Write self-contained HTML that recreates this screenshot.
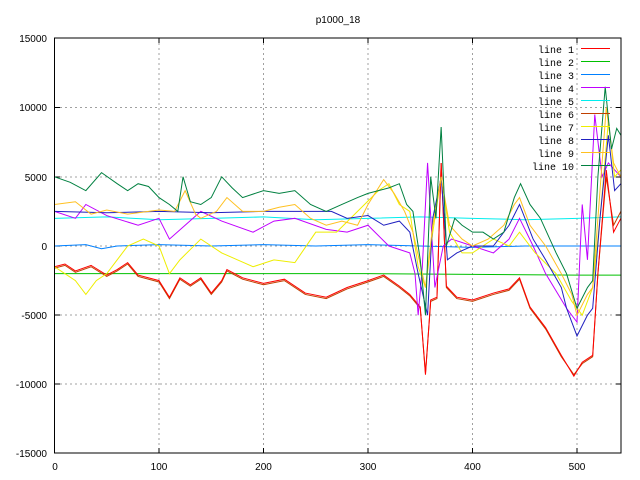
<!DOCTYPE html>
<html><head><meta charset="utf-8"><style>
html,body{margin:0;padding:0;background:#fff;}
svg{display:block;font-family:"Liberation Sans",sans-serif;font-size:10px;}
</style></head><body>
<svg width="640" height="480" viewBox="0 0 640 480">
<rect width="640" height="480" fill="#fff"/>
<text x="338" y="23" text-anchor="middle">p1000_18</text>
<g stroke="#a0a0a0" stroke-width="1" stroke-dasharray="2,3" fill="none">
<path d="M55 107.5H621M55 177H621M55 246H621M55 315H621M55 384H621"/>
<path d="M159 38V453M263.5 38V453M368 38V453M472.5 38V453M577 38V453"/>
</g>
<g text-anchor="end">
<text x="47" y="42">15000</text><text x="47" y="111">10000</text><text x="47" y="181">5000</text>
<text x="47" y="250">0</text><text x="47" y="319">-5000</text><text x="47" y="388">-10000</text><text x="47" y="457">-15000</text>
</g>
<g text-anchor="middle">
<text x="55" y="470">0</text><text x="159" y="470">100</text><text x="263.5" y="470">200</text>
<text x="368" y="470">300</text><text x="472.5" y="470">400</text><text x="577" y="470">500</text>
</g>
<g stroke="#000" stroke-width="1">
<path d="M55 107.5h5M55 177h5M55 246h5M55 315h5M55 384h5M621 107.5h-5M621 177h-5M621 246h-5M621 315h-5M621 384h-5"/>
<path d="M159 453v-5M263.5 453v-5M368 453v-5M472.5 453v-5M577 453v-5M159 38v5M263.5 38v5M368 38v5M472.5 38v5M577 38v5"/>
</g>
<g transform="translate(54.5,246) scale(1.045,-0.01384)" fill="none" stroke-width="1">
<polyline vector-effect="non-scaling-stroke" stroke="#00c000" points="0,-2000 100,-2000 200,-2000 300,-2000 400,-2050 500,-2100 542,-2100"/>
<polyline vector-effect="non-scaling-stroke" stroke="#00eeee" points="0,2000 50,2100 100,1900 150,2000 200,2100 250,1900 300,2000 350,2100 400,2000 450,1900 500,2000 542,2100"/>
<polyline vector-effect="non-scaling-stroke" stroke="#0080ff" points="0,0 30,100 45,-200 60,0 100,100 150,0 200,100 250,0 300,100 350,0 400,-100 450,0 500,0 542,0"/>
<polyline vector-effect="non-scaling-stroke" stroke="#c04000" points="0,-1600 10,-1400 20,-1900 35,-1500 50,-2200 60,-1800 70,-1300 80,-2200 100,-2600 110,-3800 120,-2400 130,-2900 140,-2400 150,-3500 160,-2600 165,-1800 180,-2400 200,-2800 220,-2500 240,-3500 260,-3800 280,-3100 300,-2600 315,-2200 330,-3000 340,-3600 350,-4500 355,-9200 360,-4000 366,-3800 370,6000 375,-3000 385,-3800 400,-4000 420,-3500 435,-3200 445,-2400 455,-4500 470,-6000 485,-8000 497,-9300 505,-8500 515,-8000 520,-2000 528,5000 535,1500 542,2500"/>
<polyline vector-effect="non-scaling-stroke" stroke="#ff0000" points="0,-1500 10,-1300 20,-1800 35,-1400 50,-2100 60,-1700 70,-1200 80,-2100 100,-2500 110,-3700 120,-2300 130,-2800 140,-2300 150,-3400 160,-2500 165,-1700 180,-2300 200,-2700 220,-2400 240,-3400 260,-3700 280,-3000 300,-2500 315,-2100 330,-2900 340,-3500 350,-4400 355,-9300 360,-3900 366,-3700 370,6000 375,-2900 385,-3700 400,-3900 420,-3400 435,-3100 445,-2300 455,-4400 470,-5900 485,-7900 497,-9400 505,-8400 515,-7900 520,-2000 528,5500 535,1000 542,2000"/>
<polyline vector-effect="non-scaling-stroke" stroke="#c000ff" points="0,2500 20,2000 30,3000 50,2200 80,1500 100,2000 110,500 125,1500 140,2500 160,1800 190,1000 210,1800 230,2000 260,1200 280,1000 300,1500 320,0 340,-500 345,-2000 348,-5000 352,-1500 357,6000 364,-3000 372,0 380,500 400,0 420,-500 435,500 445,2000 458,0 470,-2000 490,-4500 500,-5500 505,3000 510,-1000 517,9500 524,5000 530,6000 542,5000"/>
<polyline vector-effect="non-scaling-stroke" stroke="#eeee00" points="0,-1500 10,-2000 20,-2500 30,-3500 40,-2500 50,-2000 60,-1000 70,0 85,500 100,0 110,-2000 120,-1000 140,500 160,-500 175,-1000 190,-1500 210,-1000 230,-1200 250,1000 270,1000 290,2500 310,4000 320,4500 330,3000 340,2500 348,-1500 355,-3000 362,1000 370,5000 378,1000 390,-500 400,-500 420,500 435,0 445,1000 460,-500 480,-2000 495,-4000 505,-5000 515,-3000 522,2000 530,9000 536,5000 542,5500"/>
<polyline vector-effect="non-scaling-stroke" stroke="#2020c0" points="0,2500 50,2400 100,2500 150,2400 200,2500 265,2500 280,2000 300,2200 315,1500 330,1800 340,1000 348,-2000 357,-5000 362,2000 370,5000 376,-1000 385,-500 400,0 420,0 435,1500 445,3000 458,500 470,-1000 485,-3000 490,-4500 500,-6500 510,-5000 515,-4500 522,2000 530,8000 536,4000 542,4500"/>
<polyline vector-effect="non-scaling-stroke" stroke="#ffc020" points="0,3000 20,3200 35,2300 50,2600 70,2300 100,2600 115,2500 125,4000 135,2300 140,2000 155,2500 165,3500 180,2500 200,2500 215,2800 230,3000 245,2000 260,1500 275,1800 290,1500 300,3000 315,4800 325,3800 335,2500 343,1000 355,-3000 362,1500 370,5000 378,1500 390,500 400,0 415,500 430,1500 440,3000 445,3500 455,1500 470,0 485,-2000 495,-3500 500,-5000 510,-3500 515,-3000 522,4000 528,10000 535,6000 542,5000"/>
<polyline vector-effect="non-scaling-stroke" stroke="#008040" points="0,5000 15,4600 30,4000 45,5300 60,4500 70,4000 80,4500 90,4300 100,3500 110,3000 118,2500 123,5000 130,3200 140,3000 150,3500 160,5000 170,4200 180,3500 200,4000 215,3800 230,4000 245,3000 260,2500 275,3000 290,3500 300,3800 310,4000 320,4200 330,4500 337,3000 343,2500 350,-1000 355,-5000 360,5000 365,2000 370,8600 375,0 383,2000 390,1500 400,1000 410,1000 420,500 430,1000 440,3500 446,4500 455,3000 465,2000 480,-500 490,-2000 500,-4500 510,-3000 515,-2500 520,5000 527,11500 533,7000 538,8500 542,8000"/>
</g>
<rect x="54.5" y="38" width="566.5" height="415" fill="none" stroke="#000" stroke-width="1"/>
<g text-anchor="end" font-family="Liberation Mono,monospace">
<text x="574" y="53">line 1</text><text x="574" y="66">line 2</text><text x="574" y="79">line 3</text>
<text x="574" y="92">line 4</text><text x="574" y="105">line 5</text><text x="574" y="118">line 6</text>
<text x="574" y="131">line 7</text><text x="574" y="144">line 8</text><text x="574" y="157">line 9</text><text x="574" y="170">line 10</text>
</g>
<g stroke-width="1">
<path d="M581 48.5h29" stroke="#ff0000"/><path d="M581 61.5h29" stroke="#00c000"/><path d="M581 74.5h29" stroke="#0080ff"/>
<path d="M581 87.5h29" stroke="#c000ff"/><path d="M581 100.5h29" stroke="#00eeee"/><path d="M581 113.5h29" stroke="#c04000"/>
<path d="M581 126.5h29" stroke="#eeee00"/><path d="M581 139.5h29" stroke="#2020c0"/><path d="M581 152.5h29" stroke="#ffc020"/>
<path d="M581 165.5h29" stroke="#008040"/>
</g>
</svg>
</body></html>
